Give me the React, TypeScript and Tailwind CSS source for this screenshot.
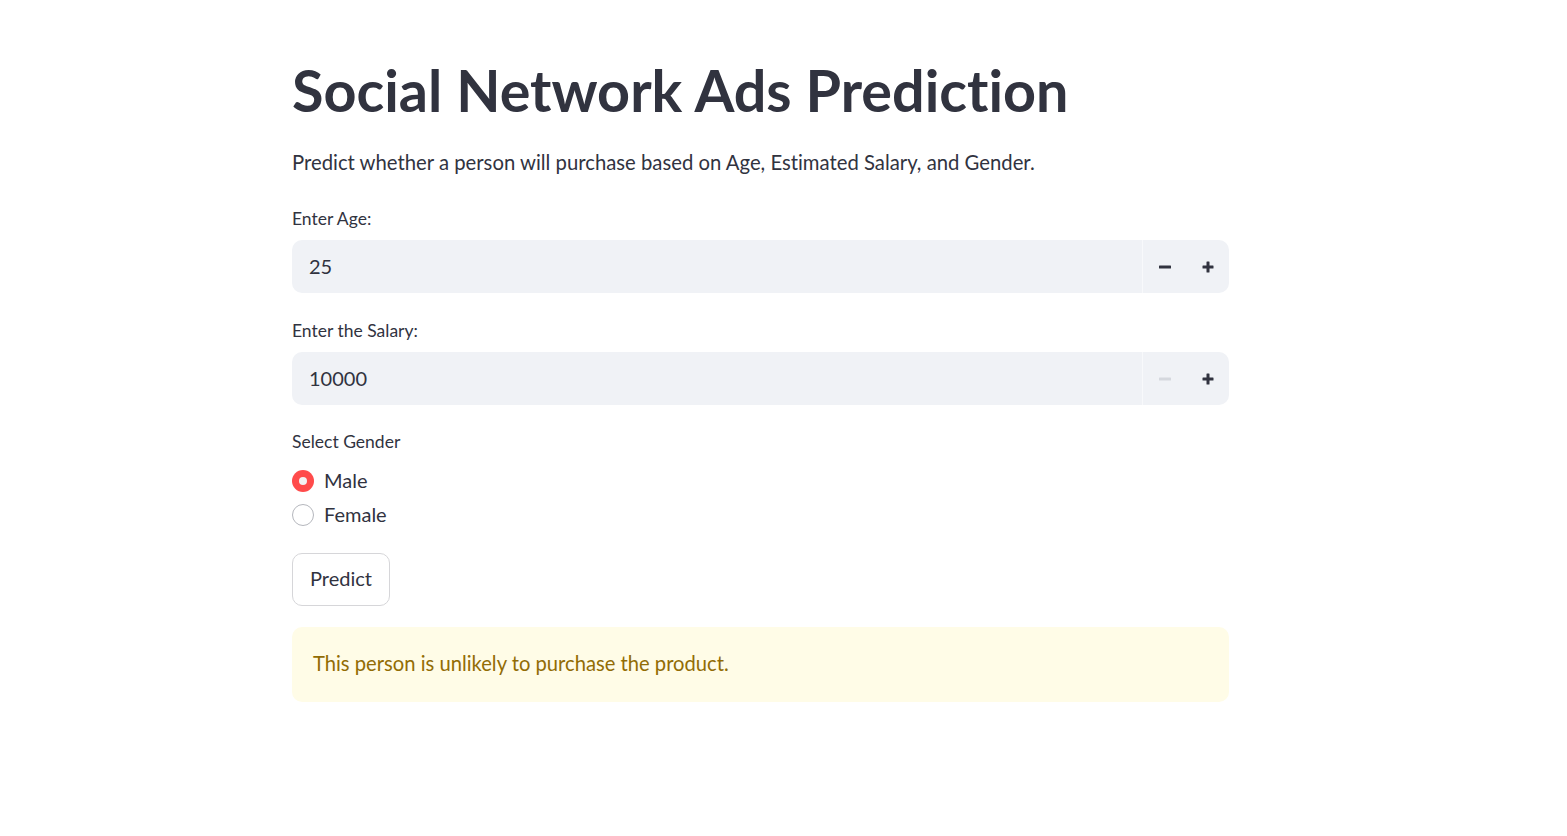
import { useState } from 'react';

function MinusIcon({ disabled }: { disabled?: boolean }) {
  return (
    <svg width="14" height="14" viewBox="0 0 14 14">
      <rect x="1" y="5.5" width="12" height="3" rx="0.5" fill={disabled ? '#d5d8de' : '#31333f'} />
    </svg>
  );
}

function PlusIcon() {
  return (
    <svg width="14" height="14" viewBox="0 0 14 14">
      <rect x="1.5" y="5.5" width="11" height="3" rx="0.5" fill="#31333f" />
      <rect x="5.5" y="1.5" width="3" height="11" rx="0.5" fill="#31333f" />
    </svg>
  );
}

function NumberInput({ label, value, minDisabled }: { label: string; value: string; minDisabled?: boolean }) {
  return (
    <div>
      <label className="block text-[17.5px] leading-[26px] text-[#31333f]">{label}</label>
      <div className="mt-2 flex h-[53px] items-stretch overflow-hidden rounded-[10px] bg-[#f0f2f6]">
        <div className="flex flex-1 items-center pb-[2px] pl-[17px] text-[20px] text-[#31333f]">{value}</div>
        <div className="flex border-l border-[#f8f9fb]">
          <button className="flex w-[43px] items-center justify-center">
            <MinusIcon disabled={minDisabled} />
          </button>
          <button className="flex w-[43px] items-center justify-center">
            <PlusIcon />
          </button>
        </div>
      </div>
    </div>
  );
}

export default function App() {
  const [gender, setGender] = useState('Male');

  return (
    <div className="min-h-screen bg-white font-['Lato',sans-serif] text-[#31333f] [font-variant-ligatures:none]">
      <main className="ml-[292px] w-[937px] pt-[57px]">
        <h1 className="text-[57.5px] font-bold leading-[66px]">Social Network Ads Prediction</h1>
        <p className="mt-[23px] text-[20.3px] leading-[32px]">
          Predict whether a person will purchase based on Age, Estimated Salary, and Gender.
        </p>

        <div className="mt-[28px]">
          <NumberInput label="Enter Age:" value="25" />
        </div>
        <div className="mt-[25px]">
          <NumberInput label="Enter the Salary:" value="10000" minDisabled />
        </div>

        <div className="mt-[24px]">
          <div className="text-[17.5px] leading-[26px]">Select Gender</div>
          <div className="mt-[9px] flex flex-col">
            {['Male', 'Female'].map(g => (
              <button
                key={g}
                onClick={() => setGender(g)}
                className="flex h-[34px] items-center gap-[10px] text-left"
              >
                {gender === g ? (
                  <span className="flex h-[22px] w-[22px] items-center justify-center rounded-full bg-[#ff4b4b]">
                    <span className="h-[8px] w-[8px] rounded-full bg-[#f3f3f3]" />
                  </span>
                ) : (
                  <span className="h-[22px] w-[22px] rounded-full border border-[#b5b7bd] bg-white" />
                )}
                <span className="pb-[2px] text-[20px]">{g}</span>
              </button>
            ))}
          </div>
        </div>

        <button className="mt-[21px] flex h-[53px] items-center rounded-[10px] border border-[#d6d6d9] bg-white px-[17px] pb-[3px] text-[20px]">
          Predict
        </button>

        <div className="mt-[21px] flex h-[75px] items-center rounded-[10px] bg-[#fffce7] px-[21px] pb-[3px] text-[20.2px] text-[#926c05]">
          This person is unlikely to purchase the product.
        </div>
      </main>
    </div>
  );
}
